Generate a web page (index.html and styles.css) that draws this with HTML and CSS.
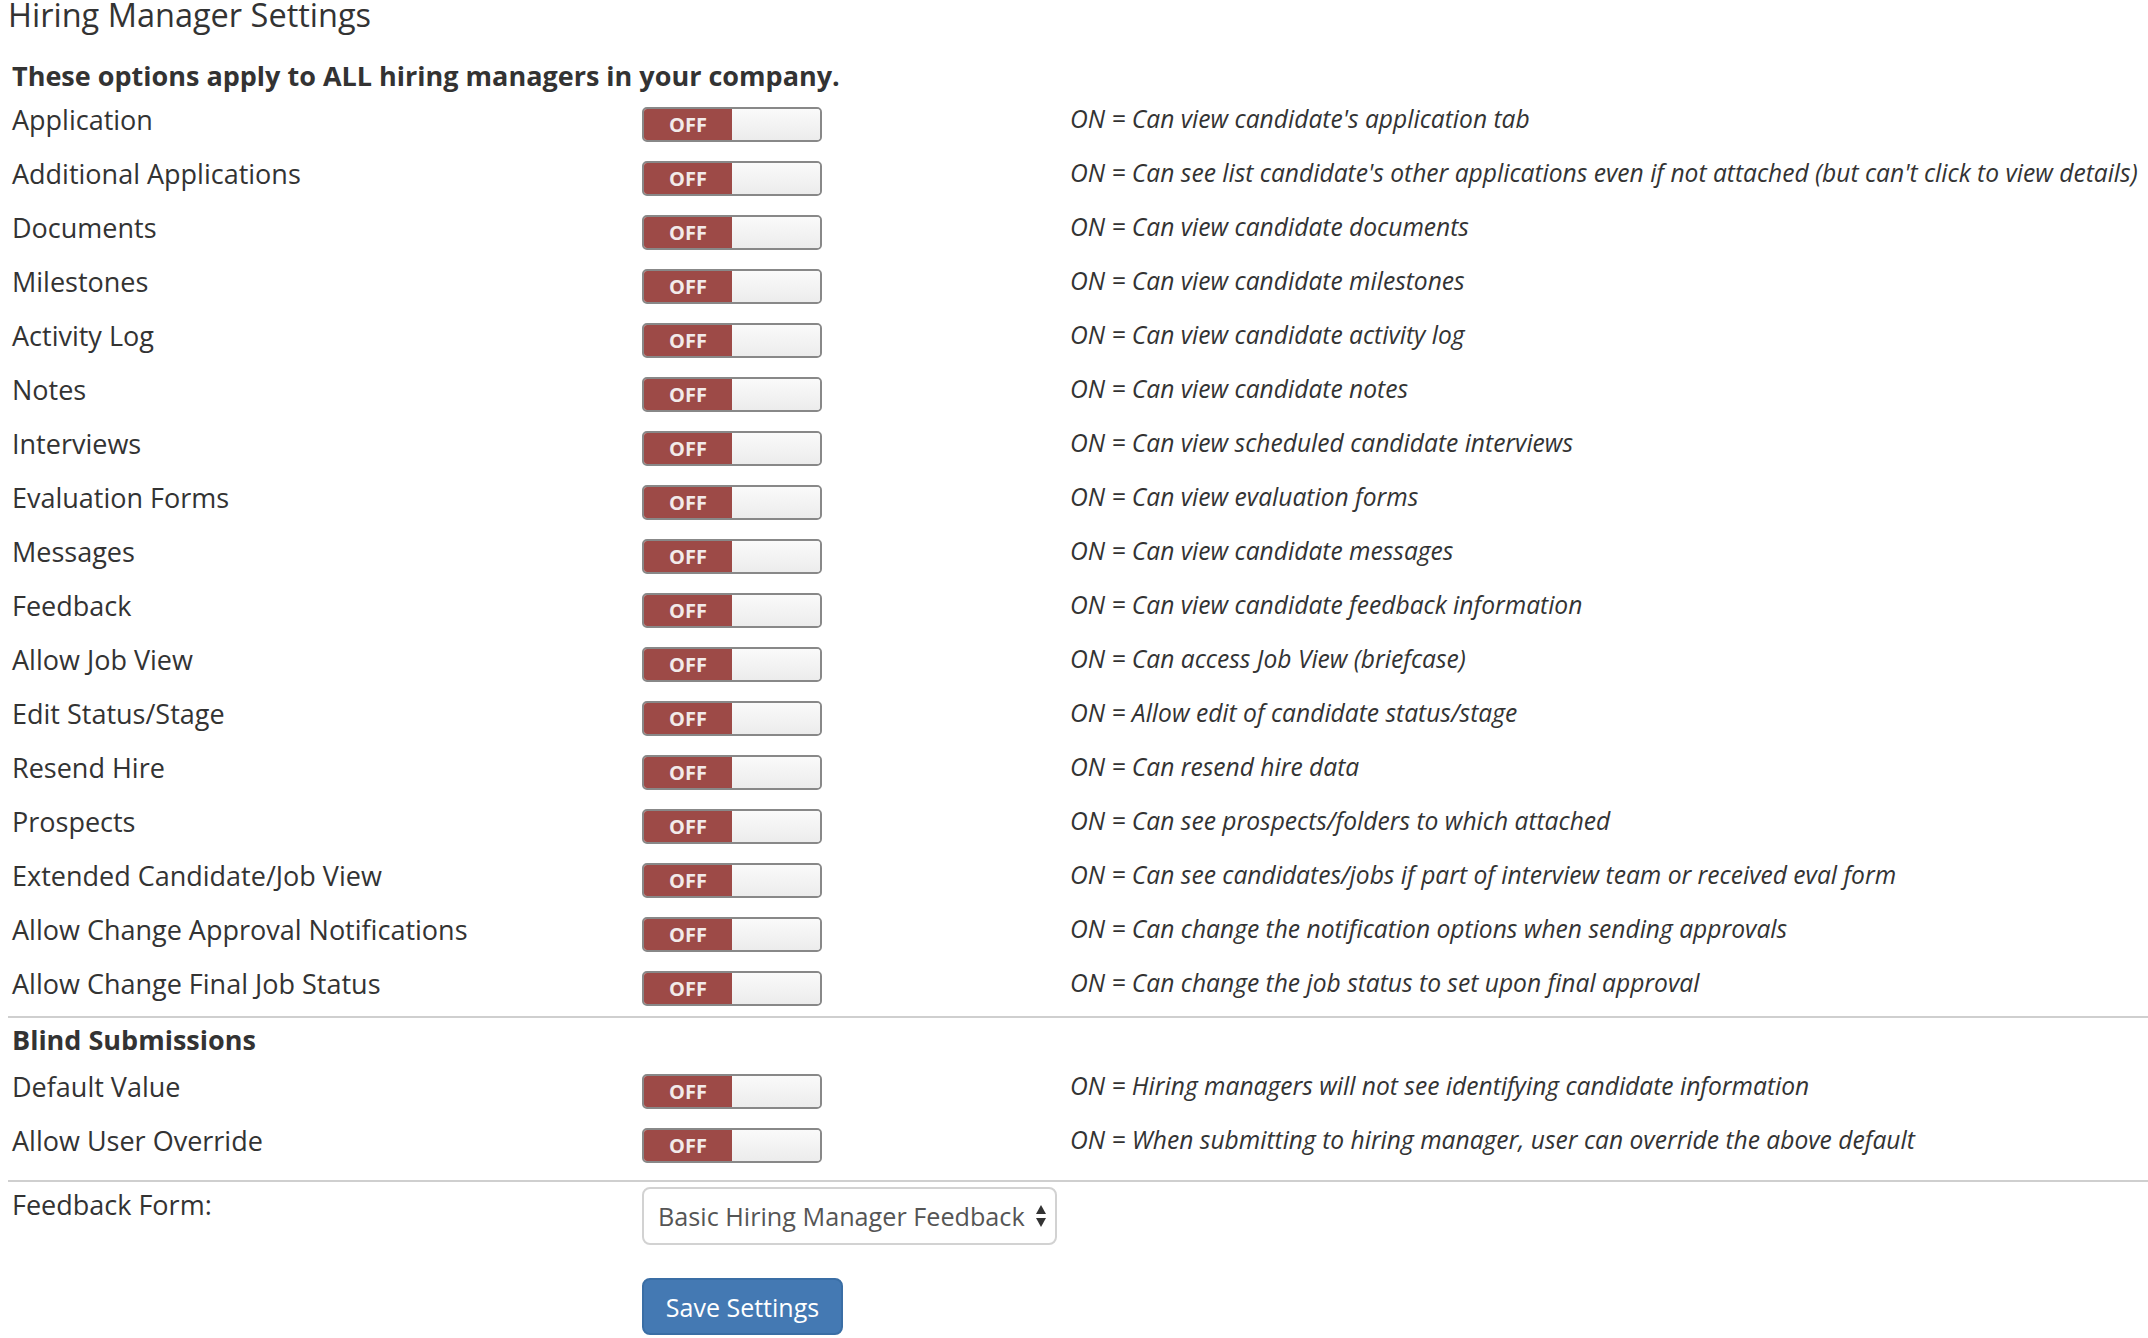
FILE: index.html
```html
<!DOCTYPE html>
<html>
<head>
<meta charset="utf-8">
<link rel="stylesheet" href="styles.css">
</head>
<body>
<div class="page">
  <h1 class="title">Hiring Manager Settings</h1>
  <div class="intro">These options apply to ALL hiring managers in your company.</div>

  <div class="group">
    <div class="row"><div class="label">Application</div><div class="ctl"><div class="switch"><span class="off">OFF</span><span class="knob"></span></div></div><div class="desc">ON = Can view candidate's application tab</div></div>
    <div class="row"><div class="label">Additional Applications</div><div class="ctl"><div class="switch"><span class="off">OFF</span><span class="knob"></span></div></div><div class="desc">ON = Can see list candidate's other applications even if not attached (but can't click to view details)</div></div>
    <div class="row"><div class="label">Documents</div><div class="ctl"><div class="switch"><span class="off">OFF</span><span class="knob"></span></div></div><div class="desc">ON = Can view candidate documents</div></div>
    <div class="row"><div class="label">Milestones</div><div class="ctl"><div class="switch"><span class="off">OFF</span><span class="knob"></span></div></div><div class="desc">ON = Can view candidate milestones</div></div>
    <div class="row"><div class="label">Activity Log</div><div class="ctl"><div class="switch"><span class="off">OFF</span><span class="knob"></span></div></div><div class="desc">ON = Can view candidate activity log</div></div>
    <div class="row"><div class="label">Notes</div><div class="ctl"><div class="switch"><span class="off">OFF</span><span class="knob"></span></div></div><div class="desc">ON = Can view candidate notes</div></div>
    <div class="row"><div class="label">Interviews</div><div class="ctl"><div class="switch"><span class="off">OFF</span><span class="knob"></span></div></div><div class="desc">ON = Can view scheduled candidate interviews</div></div>
    <div class="row"><div class="label">Evaluation Forms</div><div class="ctl"><div class="switch"><span class="off">OFF</span><span class="knob"></span></div></div><div class="desc">ON = Can view evaluation forms</div></div>
    <div class="row"><div class="label">Messages</div><div class="ctl"><div class="switch"><span class="off">OFF</span><span class="knob"></span></div></div><div class="desc">ON = Can view candidate messages</div></div>
    <div class="row"><div class="label">Feedback</div><div class="ctl"><div class="switch"><span class="off">OFF</span><span class="knob"></span></div></div><div class="desc">ON = Can view candidate feedback information</div></div>
    <div class="row"><div class="label">Allow Job View</div><div class="ctl"><div class="switch"><span class="off">OFF</span><span class="knob"></span></div></div><div class="desc">ON = Can access Job View (briefcase)</div></div>
    <div class="row"><div class="label">Edit Status/Stage</div><div class="ctl"><div class="switch"><span class="off">OFF</span><span class="knob"></span></div></div><div class="desc">ON = Allow edit of candidate status/stage</div></div>
    <div class="row"><div class="label">Resend Hire</div><div class="ctl"><div class="switch"><span class="off">OFF</span><span class="knob"></span></div></div><div class="desc">ON = Can resend hire data</div></div>
    <div class="row"><div class="label">Prospects</div><div class="ctl"><div class="switch"><span class="off">OFF</span><span class="knob"></span></div></div><div class="desc">ON = Can see prospects/folders to which attached</div></div>
    <div class="row"><div class="label">Extended Candidate/Job View</div><div class="ctl"><div class="switch"><span class="off">OFF</span><span class="knob"></span></div></div><div class="desc">ON = Can see candidates/jobs if part of interview team or received eval form</div></div>
    <div class="row"><div class="label">Allow Change Approval Notifications</div><div class="ctl"><div class="switch"><span class="off">OFF</span><span class="knob"></span></div></div><div class="desc">ON = Can change the notification options when sending approvals</div></div>
    <div class="row"><div class="label">Allow Change Final Job Status</div><div class="ctl"><div class="switch"><span class="off">OFF</span><span class="knob"></span></div></div><div class="desc">ON = Can change the job status to set upon final approval</div></div>
  </div>

  <hr class="rule">

  <div class="section-title">Blind Submissions</div>
  <div class="group group-blind">
    <div class="row"><div class="label">Default Value</div><div class="ctl"><div class="switch"><span class="off">OFF</span><span class="knob"></span></div></div><div class="desc">ON = Hiring managers will not see identifying candidate information</div></div>
    <div class="row"><div class="label">Allow User Override</div><div class="ctl"><div class="switch"><span class="off">OFF</span><span class="knob"></span></div></div><div class="desc">ON = When submitting to hiring manager, user can override the above default</div></div>
  </div>

  <hr class="rule rule-2">

  <div class="form-row">
    <div class="label form-label">Feedback Form:</div>
    <div class="ctl">
      <div class="select-wrap">
        <select class="select">
          <option>Basic Hiring Manager Feedback</option>
        </select>
        <svg class="select-arrows" width="12" height="24" viewBox="0 0 12 24"><path d="M6 1 L11 10 L1 10 Z" fill="#333"/><path d="M6 23 L11 14 L1 14 Z" fill="#333"/></svg>
      </div>
    </div>
  </div>

  <div class="button-row">
    <button class="btn">Save Settings</button>
  </div>
</div>
</body>
</html>
```

FILE: styles.css
```css
html, body {
  margin: 0;
  padding: 0;
  background: #fff;
}

body {
  font-family: "Open Sans", "DejaVu Sans", sans-serif;
  color: #333;
}

.page {
  padding: 0 0 0 8px;
}

.title {
  margin: 0;
  font-size: 32.5px;
  font-weight: 400;
  line-height: 32px;
  margin-top: -1px;
  margin-bottom: -1px;
  color: #333;
}

.intro {
  margin-top: 26px;
  padding-left: 4px;
  font-size: 27px;
  font-weight: 700;
  line-height: 40px;
  margin-bottom: 2px;
}

.row {
  display: grid;
  grid-template-columns: 634px 428px 1fr;
  height: 54px;
  align-items: start;
}

.label {
  padding-left: 4px;
  font-size: 27px;
  line-height: 44px;
  white-space: nowrap;
}

.ctl {
  padding-top: 9px;
}

.desc {
  font-size: 24.6px;
  font-style: italic;
  line-height: 42px;
  white-space: nowrap;
}

.switch {
  box-sizing: border-box;
  width: 180px;
  height: 35px;
  border: 2px solid #888;
  border-radius: 5px;
  display: flex;
  overflow: hidden;
}

.off {
  width: 88px;
  background: #9d4a47;
  color: #f2eaea;
  font-size: 20px;
  font-weight: 700;
  display: flex;
  align-items: center;
  justify-content: center;
}

.knob {
  flex: 1;
  background: linear-gradient(#fafafa, #ececec);
}

.rule {
  margin: 0;
  border: 0;
  border-top: 2px solid #cfcfcf;
}

.section-title {
  padding-left: 4px;
  font-size: 27px;
  font-weight: 700;
  line-height: 40px;
  margin-top: 2px;
  margin-bottom: 5px;
}

.group-blind {
  margin-bottom: 7px;
}

.form-row {
  display: grid;
  grid-template-columns: 634px 1fr;
  align-items: start;
  margin-top: 5px;
}

.form-label {
  line-height: 36px;
}

.form-row .ctl {
  padding-top: 0;
}

.select-wrap {
  position: relative;
  width: 415px;
}

.select {
  -webkit-appearance: none;
  appearance: none;
  box-sizing: border-box;
  width: 415px;
  height: 58px;
  padding: 0 26px 0 14px;
  border: 2px solid #d2d2d2;
  border-radius: 8px;
  background: #fff;
  font-family: "Open Sans", "DejaVu Sans", sans-serif;
  font-size: 25.2px;
  color: #555;
}

.select-arrows {
  position: absolute;
  right: 10px;
  top: 17px;
}

.button-row {
  padding-left: 634px;
  margin-top: 33px;
}

.btn {
  box-sizing: border-box;
  width: 201px;
  height: 57px;
  border: 2px solid #3a6ea5;
  border-radius: 8px;
  background: #4479b3;
  color: #fff;
  font-family: "Open Sans", "DejaVu Sans", sans-serif;
  font-size: 25px;
  padding: 0;
}
```
